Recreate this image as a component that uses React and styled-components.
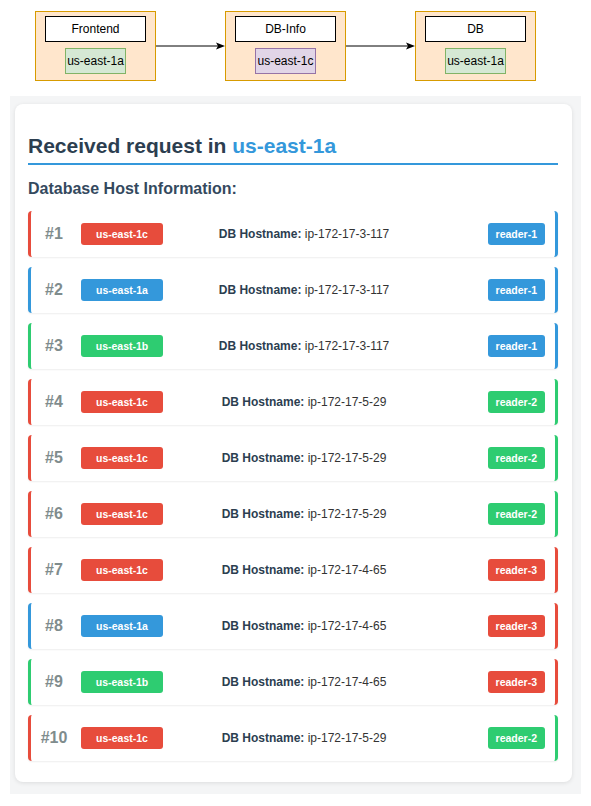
import React from 'react';
import styled, { createGlobalStyle } from 'styled-components';

const GlobalStyle = createGlobalStyle`
  body {
    margin: 0;
    background: #ffffff;
    font-family: "Liberation Sans", Arial, Helvetica, sans-serif;
  }
`;

const Diagram = styled.div`
  display: flex;
  align-items: center;
  padding: 11px 0 15px 35px;
`;

const Zone = styled.div`
  width: 121px;
  height: 70px;
  box-sizing: border-box;
  background: #ffe6cc;
  border: 1px solid #d79b00;
  display: flex;
  flex-direction: column;
  align-items: center;
  padding-top: 4px;
  gap: 6px;
`;

const ServiceName = styled.div`
  width: 101px;
  height: 26px;
  box-sizing: border-box;
  background: #ffffff;
  border: 1px solid #000000;
  display: flex;
  align-items: center;
  justify-content: center;
  font-size: 12px;
  color: #000;
`;

const ZoneTag = styled.div`
  width: 61px;
  height: 26px;
  box-sizing: border-box;
  background: ${(p) => (p.$purple ? '#e1d5e7' : '#d5e8d4')};
  border: 1px solid ${(p) => (p.$purple ? '#9673a6' : '#82b366')};
  display: flex;
  align-items: center;
  justify-content: center;
  font-size: 12px;
  color: #000;
`;

const Panel = styled.div`
  margin: 0 10px;
  padding: 8px 9px 12px 5px;
  background: #f4f5f6;
`;

const Card = styled.div`
  background: #ffffff;
  border-radius: 8px;
  box-shadow: 0 1px 4px rgba(0, 0, 0, 0.1);
  padding: 29px 14px 21px 13px;
`;

const Title = styled.h2`
  margin: 0;
  font-size: 21px;
  line-height: 25px;
  font-weight: 700;
  color: #2c3e50;
  padding-bottom: 5px;
  border-bottom: 2px solid #3498db;
`;

const Accent = styled.span`
  color: #3498db;
`;

const SubTitle = styled.h3`
  margin: 14px 0 13px;
  font-size: 16px;
  line-height: 19px;
  font-weight: 700;
  color: #34495e;
`;

const List = styled.div`
  display: flex;
  flex-direction: column;
  gap: 10px;
`;

const Row = styled.div`
  display: flex;
  align-items: center;
  height: 46px;
  box-sizing: border-box;
  background: #ffffff;
  border-radius: 4px;
  border-left: 3px solid ${(p) => p.$left};
  border-right: 3px solid ${(p) => p.$right};
  box-shadow: 0 1px 2px rgba(0, 0, 0, 0.07);
  padding: 0 10px 0 8px;
`;

const Num = styled.div`
  width: 30px;
  text-align: center;
  font-size: 16px;
  font-weight: 700;
  color: #7f8c8d;
  margin-right: 12px;
`;

const Badge = styled.span`
  display: inline-flex;
  align-items: center;
  justify-content: center;
  height: 22px;
  box-sizing: border-box;
  border-radius: 3px;
  background: ${(p) => p.$color};
  color: #ffffff;
  font-size: 10.5px;
  font-weight: 700;
  width: ${(p) => (p.$wide ? '82px' : 'auto')};
  padding: ${(p) => (p.$wide ? '0' : '0 8px')};
`;

const Host = styled.div`
  flex: 1;
  text-align: center;
  font-size: 12px;
  color: #333333;

  b {
    color: #2c3e50;
  }
`;

const ReaderCol = styled.div`
  width: 100px;
  display: flex;
  justify-content: flex-end;
`;

const colors = {
  'us-east-1a': '#3498db',
  'us-east-1b': '#2ecc71',
  'us-east-1c': '#e74c3c',
  'reader-1': '#3498db',
  'reader-2': '#2ecc71',
  'reader-3': '#e74c3c',
};

const hosts = [
  ['us-east-1c', 'ip-172-17-3-117', 'reader-1'],
  ['us-east-1a', 'ip-172-17-3-117', 'reader-1'],
  ['us-east-1b', 'ip-172-17-3-117', 'reader-1'],
  ['us-east-1c', 'ip-172-17-5-29', 'reader-2'],
  ['us-east-1c', 'ip-172-17-5-29', 'reader-2'],
  ['us-east-1c', 'ip-172-17-5-29', 'reader-2'],
  ['us-east-1c', 'ip-172-17-4-65', 'reader-3'],
  ['us-east-1a', 'ip-172-17-4-65', 'reader-3'],
  ['us-east-1b', 'ip-172-17-4-65', 'reader-3'],
  ['us-east-1c', 'ip-172-17-5-29', 'reader-2'],
];

const Arrow = () => (
  <svg width="69" height="10" viewBox="0 0 69 10">
    <line x1="0" y1="5" x2="62" y2="5" stroke="#000" strokeWidth="1" />
    <path d="M69 5 L60 1.5 L62 5 L60 8.5 Z" fill="#000" />
  </svg>
);

const App = () => {
  return (
    <>
      <GlobalStyle />
      <Diagram>
        <Zone>
          <ServiceName>Frontend</ServiceName>
          <ZoneTag>us-east-1a</ZoneTag>
        </Zone>
        <Arrow />
        <Zone>
          <ServiceName>DB-Info</ServiceName>
          <ZoneTag $purple>us-east-1c</ZoneTag>
        </Zone>
        <Arrow />
        <Zone>
          <ServiceName>DB</ServiceName>
          <ZoneTag>us-east-1a</ZoneTag>
        </Zone>
      </Diagram>

      <Panel>
        <Card>
          <Title>
            Received request in <Accent>us-east-1a</Accent>
          </Title>
          <SubTitle>Database Host Information:</SubTitle>
          <List>
            {hosts.map(([zone, host, reader], i) => (
              <Row key={i} $left={colors[zone]} $right={colors[reader]}>
                <Num>#{i + 1}</Num>
                <Badge $wide $color={colors[zone]}>{zone}</Badge>
                <Host>
                  <b>DB Hostname:</b> {host}
                </Host>
                <ReaderCol>
                  <Badge $color={colors[reader]}>{reader}</Badge>
                </ReaderCol>
              </Row>
            ))}
          </List>
        </Card>
      </Panel>
    </>
  );
};

export default App;
